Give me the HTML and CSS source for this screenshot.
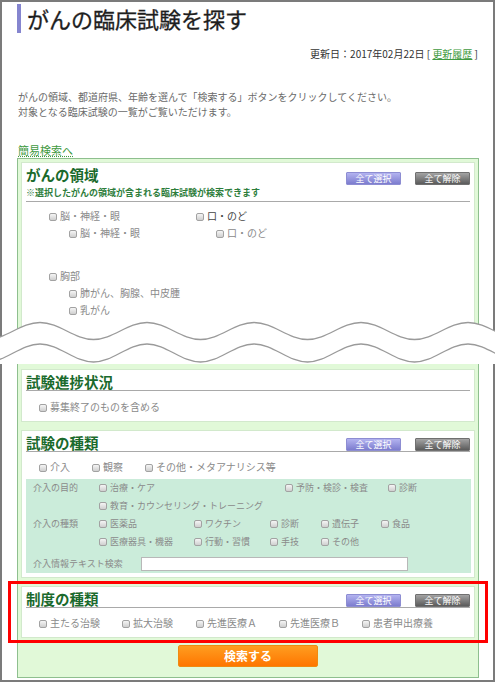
FILE: index.html
```html
<!DOCTYPE html>
<html lang="ja">
<head>
<meta charset="utf-8">
<title>がんの臨床試験を探す</title>
<link rel="stylesheet" href="styles.css">
</head>
<body>
<div class="page">
  <h1 class="title">がんの臨床試験を探す</h1>
  <p class="updated">更新日：2017年02月22日 [ <a href="#" class="link">更新履歴</a> ]</p>
  <p class="intro">がんの領域、都道府県、年齢を選んで「検索する」ボタンをクリックしてください。<br>対象となる臨床試験の一覧がご覧いただけます。</p>
  <a href="#" class="link simple">簡易検索へ</a>

  <div class="panel panel-top">
    <section class="box box-cut">
      <div class="box-head head-note">
        <div>
          <h2 class="box-title">がんの領域</h2>
          <p class="box-note">※選択したがんの領域が含まれる臨床試験が検索できます</p>
        </div>
        <div class="btns btns-a">
          <span class="btn btn-select">全て選択</span>
          <span class="btn btn-clear">全て解除</span>
        </div>
      </div>
      <div class="areas">
        <div class="group">
          <label class="cb"><span class="mark"></span>脳・神経・眼</label>
          <label class="cb sub"><span class="mark"></span>脳・神経・眼</label>
        </div>
        <div class="group">
          <label class="cb dark"><span class="mark"></span>口・のど</label>
          <label class="cb sub"><span class="mark"></span>口・のど</label>
        </div>
        <div class="group">
          <label class="cb"><span class="mark"></span>胸部</label>
          <label class="cb sub"><span class="mark"></span>肺がん、胸腺、中皮腫</label>
          <label class="cb sub"><span class="mark"></span>乳がん</label>
        </div>
      </div>
    </section>
  </div>

  <svg class="wave" viewBox="0 0 495 46" width="495" height="46" aria-hidden="true">
    <path d="M-67 4.5 C-47.5 4.5 -33 21.5 -13.5 21.5 S20.5 4.5 40 4.5 S74 21.5 93.5 21.5 S127.5 4.5 147 4.5 S181 21.5 200.5 21.5 S234.5 4.5 254 4.5 S288 21.5 307.5 21.5 S341.5 4.5 361 4.5 S395 21.5 414.5 21.5 S448.5 4.5 468 4.5 S502 21.5 521.5 21.5 L521.5 46 L-67 46 Z" fill="#fff"/>
    <path d="M-67 4.5 C-47.5 4.5 -33 21.5 -13.5 21.5 S20.5 4.5 40 4.5 S74 21.5 93.5 21.5 S127.5 4.5 147 4.5 S181 21.5 200.5 21.5 S234.5 4.5 254 4.5 S288 21.5 307.5 21.5 S341.5 4.5 361 4.5 S395 21.5 414.5 21.5 S448.5 4.5 468 4.5 S502 21.5 521.5 21.5" fill="none" stroke="#9a9a9a" stroke-width="1.3"/>
    <path d="M-67 26 C-47.5 26 -33 44 -13.5 44 S20.5 26 40 26 S74 44 93.5 44 S127.5 26 147 26 S181 44 200.5 44 S234.5 26 254 26 S288 44 307.5 44 S341.5 26 361 26 S395 44 414.5 44 S448.5 26 468 26 S502 44 521.5 44" fill="none" stroke="#9a9a9a" stroke-width="1.3"/>
  </svg>

  <div class="panel panel-bottom">
    <section class="box">
      <div class="box-head">
        <h2 class="box-title">試験進捗状況</h2>
      </div>
      <div class="opts opts-first">
        <label class="opt"><span class="mark"></span>募集終了のものを含める</label>
      </div>
    </section>

    <section class="box box-gap">
      <div class="box-head">
        <h2 class="box-title">試験の種類</h2>
        <div class="btns">
          <span class="btn btn-select">全て選択</span>
          <span class="btn btn-clear">全て解除</span>
        </div>
      </div>
      <div class="opts opts-tight">
        <label class="opt w53"><span class="mark"></span>介入</label>
        <label class="opt w53"><span class="mark"></span>観察</label>
        <label class="opt"><span class="mark"></span>その他・メタアナリシス等</label>
      </div>
      <div class="ttable">
        <div class="trow">
          <span class="tlabel">介入の目的</span>
          <label class="topt t186"><span class="mark"></span>治療・ケア</label>
          <label class="topt t103"><span class="mark"></span>予防・検診・検査</label>
          <label class="topt"><span class="mark"></span>診断</label>
        </div>
        <div class="trow">
          <span class="tlabel"></span>
          <label class="topt"><span class="mark"></span>教育・カウンセリング・トレーニング</label>
        </div>
        <div class="trow">
          <span class="tlabel">介入の種類</span>
          <label class="topt t95"><span class="mark"></span>医薬品</label>
          <label class="topt t76"><span class="mark"></span>ワクチン</label>
          <label class="topt t51"><span class="mark"></span>診断</label>
          <label class="topt t60"><span class="mark"></span>遺伝子</label>
          <label class="topt"><span class="mark"></span>食品</label>
        </div>
        <div class="trow">
          <span class="tlabel"></span>
          <label class="topt t95"><span class="mark"></span>医療器具・機器</label>
          <label class="topt t76"><span class="mark"></span>行動・習慣</label>
          <label class="topt t51"><span class="mark"></span>手技</label>
          <label class="topt"><span class="mark"></span>その他</label>
        </div>
        <div class="tsearch">
          <span class="tlabel tlabel-wide">介入情報テキスト検索</span>
          <span class="tinput"></span>
        </div>
      </div>
    </section>

    <section class="box box-gap box-marked">
      <div class="box-head">
        <h2 class="box-title">制度の種類</h2>
        <div class="btns">
          <span class="btn btn-select">全て選択</span>
          <span class="btn btn-clear">全て解除</span>
        </div>
      </div>
      <div class="opts opts-tight">
        <label class="opt w83"><span class="mark"></span>主たる治験</label>
        <label class="opt w74"><span class="mark"></span>拡大治験</label>
        <label class="opt w83"><span class="mark"></span>先進医療Ａ</label>
        <label class="opt w83"><span class="mark"></span>先進医療Ｂ</label>
        <label class="opt"><span class="mark"></span>患者申出療養</label>
      </div>
      <div class="annot"></div>
    </section>

    <span class="search">検索する</span>
  </div>
</div>
</body>
</html>
```

FILE: styles.css
```css
* { box-sizing: border-box; }

html, body {
  margin: 0;
  padding: 0;
  background: #fff;
}

body {
  font-family: "Noto Sans CJK JP", "Noto Sans", sans-serif;
  color: #333;
}

.page {
  width: 495px;
  height: 682px;
  border: 2px solid #7b7b7b;
  padding: 0 15px;
}

.title {
  margin: 2px 0 0;
  height: 29px;
  border-left: 4px solid #8585cf;
  padding-left: 6px;
  font-size: 22px;
  line-height: 29px;
  font-weight: normal;
  color: #1e1e1e;
  -webkit-text-stroke: 0.3px #1e1e1e;
}

.updated {
  margin: 14px 0 0;
  text-align: right;
  font-size: 10px;
  line-height: 14px;
  color: #333;
}

.link {
  color: #3f9a3f;
  text-decoration: underline;
}

.intro {
  margin: 28px 0 0 1px;
  font-size: 10px;
  line-height: 15px;
  color: #6a6a6a;
}

.simple {
  display: block;
  width: max-content;
  margin: 24px 0 0 1px;
  font-size: 11px;
  line-height: 14px;
  text-decoration: underline dotted;
}

.panel {
  width: 462px;
  background: #e1f9d8;
  border: 1px solid #8ebf8e;
  padding: 3px;
}

.panel-top {
  margin-top: 1px;
  height: 177px;
  border-bottom: 0;
  padding-bottom: 0;
  overflow: hidden;
}

.box-cut { min-height: 200px; }

.wave {
  display: block;
  position: relative;
  margin: -17px -17px 0;
  width: 495px;
  height: 46px;
}

.panel-bottom {
  border-top: 0;
  padding: 5px 3px 10px;
}

.box {
  background: #fff;
  border: 1px solid #d2e9cc;
}

.box-gap { margin-top: 8px; }

.box-marked { position: relative; }

.box-head {
  display: flex;
  justify-content: space-between;
  align-items: flex-start;
  margin: 0 4px;
  padding-top: 4px;
  border-bottom: 1px solid #a9a9a9;
}

.head-note { padding-bottom: 2px; }

.box-title {
  margin: 0;
  font-size: 14.5px;
  line-height: 16px;
  font-weight: bold;
  color: #1a6a2c;
}

.box-note {
  margin: 4px 0 0;
  font-size: 9px;
  line-height: 12px;
  font-weight: bold;
  color: #2d7d3b;
}

.btns {
  display: flex;
  gap: 14px;
  margin-top: 3px;
  margin-bottom: -13px;
  height: 13px;
}

.btns-a { margin-top: 5px; }

.btn {
  display: block;
  width: 55px;
  height: 13px;
  font-size: 9px;
  line-height: 11px;
  color: #fff;
  text-align: center;
  border-radius: 1px;
}

.btn-select {
  background: linear-gradient(#b3b3f0, #7c7cce);
  border: 1px solid #8d8dd2;
}

.btn-clear {
  background: linear-gradient(#a3a3a3, #5b5b5b);
  border: 1px solid #707070;
}

.mark {
  display: inline-block;
  width: 8px;
  height: 8px;
  margin-right: 3px;
  border: 1px solid #a2a2a2;
  border-radius: 2px;
  background: linear-gradient(#f5f5f5, #cfcfcf);
  vertical-align: -1px;
}

.areas {
  display: grid;
  grid-template-columns: 147px 1fr;
  padding: 5px 0 0 27px;
}

.group { min-height: 60px; }

.cb {
  display: block;
  font-size: 10px;
  line-height: 17px;
  color: #8a8a8a;
  white-space: nowrap;
}

.cb.dark { color: #444; }

.cb.sub { padding-left: 20px; }

.opts {
  display: flex;
  padding: 6px 0 6px 17px;
}

.opts-first { padding-top: 7px; }

.opts-tight { padding-bottom: 0; }

.box-marked .opts-tight { padding-bottom: 6px; }

.opt {
  display: block;
  font-size: 10px;
  line-height: 17px;
  color: #8a8a8a;
  white-space: nowrap;
}

.w53 { width: 53px; }
.w74 { width: 74px; }
.w83 { width: 83px; }

.ttable {
  margin: 4px 3px 4px 4px;
  background: #cbecda;
  padding: 0 0 2px 7px;
}

.trow {
  display: flex;
  height: 18px;
  line-height: 18px;
  font-size: 9px;
  color: #8a8a8a;
}

.tlabel {
  flex: none;
  width: 66px;
  white-space: nowrap;
}

.tlabel-wide { width: 108px; }

.topt {
  flex: none;
  white-space: nowrap;
}

.t51 { width: 51px; }
.t60 { width: 60px; }
.t76 { width: 76px; }
.t95 { width: 95px; }
.t103 { width: 103px; }
.t186 { width: 186px; }

.tsearch {
  display: flex;
  align-items: center;
  margin-top: 6px;
  height: 14px;
  font-size: 9px;
  line-height: 14px;
  color: #8a8a8a;
}

.tinput {
  display: block;
  width: 267px;
  height: 14px;
  border: 1px solid #b8b8b8;
  background: #fff;
}

.annot {
  position: absolute;
  top: -6px;
  bottom: -6px;
  left: -14px;
  right: -14px;
  border: 3px solid #f00;
}

.search {
  display: block;
  width: 140px;
  height: 22px;
  margin: 7px auto 0;
  background: linear-gradient(#ff9d20, #ff7600);
  border: 1px solid #f08a10;
  border-radius: 2px;
  color: #fff;
  font-size: 12px;
  font-weight: bold;
  line-height: 20px;
  text-align: center;
}
```
